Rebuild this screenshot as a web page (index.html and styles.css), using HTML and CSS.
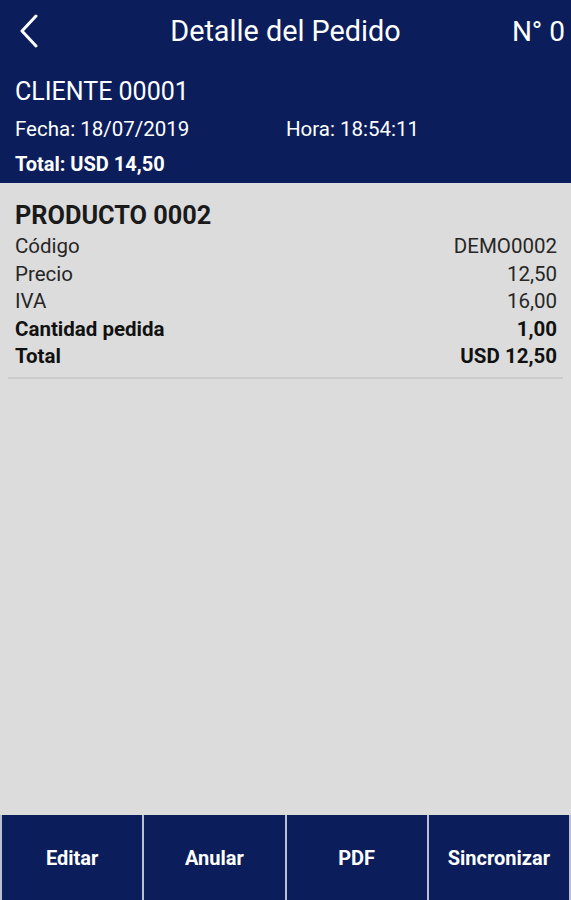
FILE: index.html
```html
<!DOCTYPE html>
<html lang="es">
<head>
  <meta charset="UTF-8">
  <meta name="viewport" content="width=device-width, initial-scale=1.0">
  <title>Detalle del Pedido</title>
  <link rel="stylesheet" href="styles.css">
</head>
<body>
  <div class="screen">
    <header class="header">
      <div class="toolbar">
        <svg class="back" width="22" height="34" viewBox="0 0 22 34">
          <path d="M18 2 L4 17 L18 32" fill="none" stroke="#fff" stroke-width="3" stroke-linecap="round" stroke-linejoin="round"/>
        </svg>
        <span class="title">Detalle del Pedido</span>
        <span class="number">N° 0</span>
      </div>
      <div class="client">CLIENTE 00001</div>
      <div class="meta">
        <span class="fecha">Fecha: 18/07/2019</span>
        <span>Hora: 18:54:11</span>
      </div>
      <div class="total">Total: USD 14,50</div>
    </header>

    <main class="content">
      <div class="product">
        <h2>PRODUCTO 0002</h2>
        <div class="row"><span>Código</span><span>DEMO0002</span></div>
        <div class="row"><span>Precio</span><span>12,50</span></div>
        <div class="row"><span>IVA</span><span>16,00</span></div>
        <div class="row bold"><span>Cantidad pedida</span><span>1,00</span></div>
        <div class="row bold"><span>Total</span><span>USD 12,50</span></div>
      </div>
    </main>

    <nav class="actions">
      <button>Editar</button>
      <button>Anular</button>
      <button>PDF</button>
      <button>Sincronizar</button>
    </nav>
  </div>
</body>
</html>
```

FILE: styles.css
```css
body { margin: 0; font-family: Roboto, "Liberation Sans", sans-serif; background: #dcdcdc; }
.screen { display: flex; flex-direction: column; height: 900px; overflow: hidden; }

.header { background: #0b1e5b; color: #fff; padding: 0 0 0 15px; height: 183px; box-sizing: border-box; }
.toolbar { display: flex; align-items: center; height: 62px; position: relative; }
.back { margin-left: 3px; }
.title { position: absolute; left: 0; right: 15px; text-align: center; font-size: 28.8px; }
.number { margin-left: auto; font-size: 28px; padding-right: 6px; }
.client { font-size: 25px; margin-top: 17px; line-height: 26px; }
.meta { display: flex; font-size: 20.5px; margin-top: 13px; line-height: 22px; }
.fecha { width: 271px; }
.total { font-size: 20px; font-weight: bold; margin-top: 13px; line-height: 22px; }

.content { flex: 1; }
.product { margin: 0 8px; padding: 20px 6px 6px 7px; border-bottom: 2px solid #cbcbcb; }
.product h2 { margin: 0 0 4px; font-size: 25.3px; line-height: 26px; color: #1a1a1a; }
.row { display: flex; justify-content: space-between; font-size: 20.5px; line-height: 27.5px; color: #262626; }
.row.bold { font-weight: bold; color: #111; }

.actions { display: flex; gap: 2px; height: 85px; padding: 0 2px; background: #b9c0d2; }
.actions button { flex: 1; background: #0b1e5b; color: #fff; border: none; font-family: inherit; font-size: 20px; font-weight: bold; padding: 0; }
```
